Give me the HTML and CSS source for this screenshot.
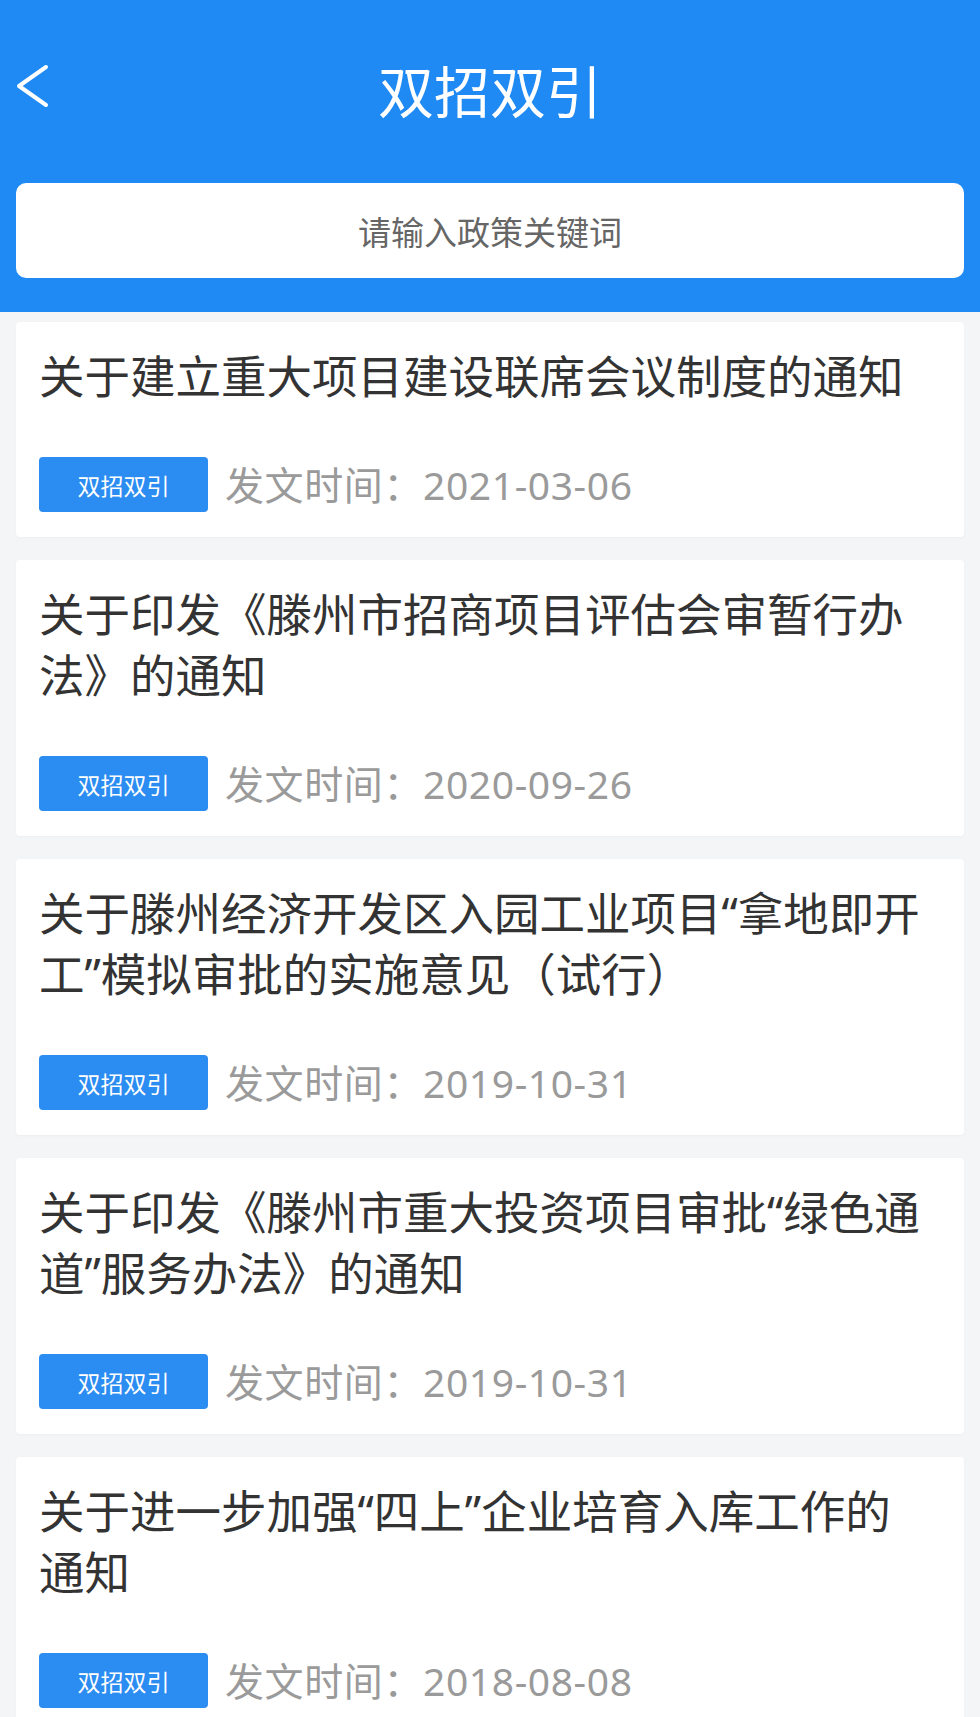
FILE: index.html
```html
<!DOCTYPE html>
<html lang="zh-CN">
<head>
<meta charset="utf-8">
<title>双招双引</title>
<link rel="stylesheet" href="styles.css">
</head>
<body>
<header class="header">
  <div class="topbar">
    <span class="back">
      <svg width="34" height="46" viewBox="0 0 34 46"><path d="M30 4 L3 23 L30 42" fill="none" stroke="#fff" stroke-width="4" stroke-linecap="round" stroke-linejoin="round"/></svg>
    </span>
    <h1 class="page-title">双招双引</h1>
    <span></span>
  </div>
  <div class="search">请输入政策关键词</div>
</header>
<main class="list">
  <div class="card">
    <p class="title">关于建立重大项目建设联席会议制度的通知</p>
    <div class="meta"><span class="tag">双招双引</span><span class="date">发文时间：2021-03-06</span></div>
  </div>
  <div class="card">
    <p class="title">关于印发《滕州市招商项目评估会审暂行办法》的通知</p>
    <div class="meta"><span class="tag">双招双引</span><span class="date">发文时间：2020-09-26</span></div>
  </div>
  <div class="card">
    <p class="title">关于滕州经济开发区入园工业项目“拿地即开工”模拟审批的实施意见（试行）</p>
    <div class="meta"><span class="tag">双招双引</span><span class="date">发文时间：2019-10-31</span></div>
  </div>
  <div class="card">
    <p class="title">关于印发《滕州市重大投资项目审批“绿色通道”服务办法》的通知</p>
    <div class="meta"><span class="tag">双招双引</span><span class="date">发文时间：2019-10-31</span></div>
  </div>
  <div class="card">
    <p class="title">关于进一步加强“四上”企业培育入库工作的通知</p>
    <div class="meta"><span class="tag">双招双引</span><span class="date">发文时间：2018-08-08</span></div>
  </div>
</main>
</body>
</html>
```
FILE: styles.css
```css
html, body {
  margin: 0;
  padding: 0;
}
body {
  width: 980px;
  background: #f4f5f7;
  font-family: "Noto Sans", "Noto Sans CJK SC", sans-serif;
}
.header {
  background: #1f8af3;
  padding: 0 16px 34px;
}
.topbar {
  height: 178px;
  display: grid;
  grid-template-columns: 70px 1fr 70px;
  align-items: center;
}
.back {
  display: flex;
  align-items: center;
  margin-bottom: 6px;
}
.page-title {
  margin: 0 0 -4px;
  text-align: center;
  color: #fff;
  font-size: 56px;
  font-weight: 400;
  line-height: 70px;
}
.search {
  margin-top: 5px;
  height: 95px;
  background: #fff;
  border-radius: 10px;
  display: flex;
  align-items: center;
  justify-content: center;
  font-size: 33px;
  color: #666;
}
.list {
  padding: 10px 16px;
  display: flex;
  flex-direction: column;
  gap: 23px;
}
.card {
  background: #fff;
  border-radius: 4px;
  padding: 24px 38px 25px 23px;
  box-shadow: 0 1px 3px rgba(0, 0, 0, 0.03);
}
.title {
  margin: 0 0 50px;
  font-size: 45.5px;
  line-height: 61px;
  color: #333;
}
.meta {
  display: flex;
  align-items: center;
  gap: 17px;
}
.tag {
  width: 169px;
  height: 55px;
  background: #2b8cf1;
  color: #fff;
  font-size: 23px;
  border-radius: 4px;
  display: flex;
  align-items: center;
  justify-content: center;
}
.date {
  font-size: 39px;
  line-height: 55px;
  letter-spacing: 0.6px;
  color: #9a9a9a;
}
```
